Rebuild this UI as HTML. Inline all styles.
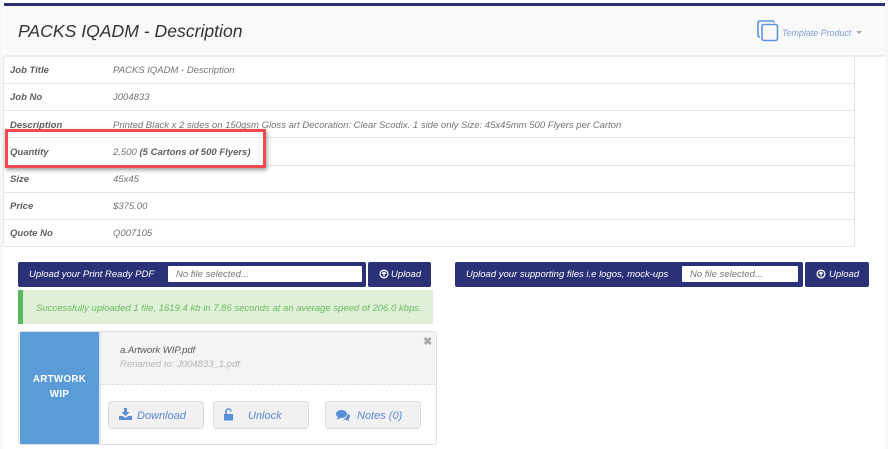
<!DOCTYPE html>
<html><head><meta charset="utf-8">
<style>
html,body{margin:0;padding:0;background:#fff}
body{width:888px;height:449px;position:relative;overflow:hidden;font-family:"Liberation Sans",sans-serif;font-style:italic}
#w{position:absolute;left:0;top:0;width:888px;height:449px;filter:blur(.3px)}
.a{position:absolute;white-space:nowrap}
.l{left:10px;font-size:9.500px;font-weight:bold;color:#5f5f5f;line-height:12px}
.v{left:113px;font-size:9.530px;color:#747474;line-height:12px}
.h{position:absolute;left:4px;width:851px;height:1px;background:#e6e6e6}
.navy{position:absolute;background:#2a3176;border-radius:2px;color:#fff;font-size:9.500px;line-height:25px;height:25px}
.inp{position:absolute;background:#fff;border-radius:1px;color:#777;font-size:9.500px;line-height:18px;height:16px;top:266px}
.btn{position:absolute;top:401px;height:28px;background:#f1f1f1;border:1px solid #dcdcdc;border-radius:4px;box-sizing:border-box;color:#5b86d6;font-size:11px;line-height:28px}
</style></head><body><div id="w">
<div class="a" style="left:0;top:0;width:3px;height:449px;background:#f7f7f7"></div>
<div class="a" style="left:885px;top:0;width:3px;height:449px;background:#f7f7f7"></div>
<div class="a" style="left:4px;top:6px;width:881px;height:49px;background:#f9f9f9"></div>
<div class="a" style="left:4px;top:3px;width:881px;height:3px;background:#2a3176"></div>
<div class="a" style="left:4px;top:55px;width:881px;height:2px;background:#ececec"></div>
<div class="a" style="left:18px;top:21px;font-size:17.600px;line-height:21px;color:#333">PACKS IQADM - Description</div>
<svg class="a" style="left:757px;top:20px" width="22" height="22" viewBox="0 0 22 22" fill="none" stroke="#5b93e2" stroke-width="1.6"><path d="M17 2.500 Q17 1 15 1 H3 Q1 1 1 3 V15 Q1 17 3 17"/><rect x="5" y="4.500" width="15.500" height="16" rx="2"/></svg>
<div class="a" style="left:782px;top:27px;font-size:8.900px;line-height:12px;color:#7f9fdc">Template Product</div>
<div class="a" style="left:856px;top:31px;width:0;height:0;border-left:3px solid transparent;border-right:3px solid transparent;border-top:3px solid #aaa"></div>

<div class="a" style="left:3px;top:57px;width:1px;height:189px;background:#e6e6e6"></div>
<div class="a" style="left:854px;top:57px;width:1px;height:190px;background:#e6e6e6"></div>
<div class="h" style="top:83px"></div>
<div class="h" style="top:110px"></div>
<div class="h" style="top:137px"></div>
<div class="h" style="top:165px"></div>
<div class="h" style="top:192px"></div>
<div class="h" style="top:219px"></div>
<div class="h" style="top:246px"></div>

<div class="a l" style="top:65px">Job Title</div><div class="a v" style="top:65px">PACKS IQADM - Description</div>
<div class="a l" style="top:92px">Job No</div><div class="a v" style="top:92px">J004833</div>
<div class="a l" style="top:120px">Description</div><div class="a v" style="top:120px">Printed Black x 2 sides on 150gsm Gloss art Decoration: Clear Scodix. 1 side only Size: 45x45mm 500 Flyers per Carton</div>
<div class="a l" style="top:147px">Quantity</div><div class="a v" style="top:147px">2,500 <b style="color:#5f5f5f">(5 Cartons of 500 Flyers)</b></div>
<div class="a l" style="top:174px">Size</div><div class="a v" style="top:174px">45x45</div>
<div class="a l" style="top:201px">Price</div><div class="a v" style="top:201px">$375.00</div>
<div class="a l" style="top:228px">Quote No</div><div class="a v" style="top:228px">Q007105</div>

<div class="a" style="left:5px;top:129px;width:255px;height:33px;border:3px solid #f04a50;box-shadow:1px 2px 4px rgba(0,0,0,.4)"></div>

<div class="navy" style="left:18px;top:262px;width:348px;padding-left:11px;box-sizing:border-box">Upload your Print Ready PDF</div>
<div class="inp" style="left:168px;width:194px;padding-left:8px;box-sizing:border-box">No file selected...</div>
<div class="navy" style="left:368px;top:262px;width:63px"><svg class="a" style="left:11px;top:7px" width="10" height="10" viewBox="0 0 10 10" fill="none" stroke="#fff" stroke-width="1.3"><circle cx="5" cy="5" r="3.900"/><path d="M5 7.500V3.200M3.200 4.800L5 3l1.800 1.800"/></svg><span class="a" style="left:23px">Upload</span></div>

<div class="a" style="left:18px;top:290px;width:415px;height:34px;background:#dff0d8"></div>
<div class="a" style="left:18px;top:290px;width:5px;height:34px;background:#5cb85c"></div>
<div class="a" style="left:36px;top:303px;font-size:9.530px;line-height:12px;color:#6cba5f">Successfully uploaded 1 file, 1619.4 kb in 7.86 seconds at an average speed of 206.0 kbps.</div>

<div class="navy" style="left:455px;top:262px;width:348px;padding-left:11px;box-sizing:border-box">Upload your supporting files i.e logos, mock-ups</div>
<div class="inp" style="left:682px;width:116px;padding-left:8px;box-sizing:border-box">No file selected...</div>
<div class="navy" style="left:805px;top:262px;width:64px"><svg class="a" style="left:11px;top:7px" width="10" height="10" viewBox="0 0 10 10" fill="none" stroke="#fff" stroke-width="1.3"><circle cx="5" cy="5" r="3.900"/><path d="M5 7.500V3.200M3.200 4.800L5 3l1.800 1.800"/></svg><span class="a" style="left:24px">Upload</span></div>

<div class="a" style="left:18px;top:331px;width:419px;height:114px;box-sizing:border-box;border:1px solid #e0e0e0;border-radius:3px;background:#fff"></div>
<div class="a" style="left:20px;top:332px;width:79px;height:112px;background:#5b9bd8"></div>
<div class="a" style="left:99px;top:332px;width:2px;height:112px;background:#dfe6ee"></div>
<div class="a" style="left:101px;top:332px;width:335px;height:52px;background:#f4f4f4;border-bottom:1px dashed #e0e0e0"></div>
<div class="a" style="left:20px;top:372px;width:79px;text-align:center;font-size:9.800px;font-weight:bold;font-style:normal;line-height:15px;color:#fff;white-space:normal;letter-spacing:.3px">ARTWORK<br>WIP</div>
<div class="a" style="left:120px;top:345px;font-size:9.500px;line-height:12px;color:#555">a.Artwork WIP.pdf</div>
<div class="a" style="left:120px;top:359px;font-size:9.500px;line-height:12px;color:#b5b5b5">Renamed to: J004833_1.pdf</div>
<div class="a" style="left:423px;top:337px;font-size:11px;line-height:11px;font-style:normal;font-weight:bold;color:#aaa">✖</div>

<div class="btn" style="left:108px;width:96px"><svg class="a" style="left:10px;top:6px" width="13" height="12" viewBox="0 0 13 12" fill="#5b8ed8"><path d="M5 0h3v4h2.500L6.500 8 2.500 4H5z"/><path d="M0 8h3.500l3 2 3-2H13v4H0z"/></svg><span class="a" style="left:28px">Download</span></div>
<div class="btn" style="left:213px;width:96px"><svg class="a" style="left:10px;top:6px" width="10" height="13" viewBox="0 0 10 13" fill="#5b8ed8"><path d="M0 6h9v6.500H0z"/><path d="M2 6V3.500a2.500 2.500 0 0 1 5 0" fill="none" stroke="#5b8ed8" stroke-width="1.6"/></svg><span class="a" style="left:34px">Unlock</span></div>
<div class="btn" style="left:325px;width:96px"><svg class="a" style="left:10px;top:8px" width="14" height="12" viewBox="0 0 14 12" fill="#5b8ed8"><ellipse cx="5.500" cy="4" rx="5.500" ry="4"/><path d="M2 6L1 10l4-2.500z"/><path d="M11.500 3.500C13 4.200 14 5.300 14 6.500c0 1-.6 1.900-1.500 2.500l.7 2.500-3-1.800C8.500 9.700 7.500 9.400 6.700 9c2.800-.2 5.200-2.500 4.800-5.500z"/></svg><span class="a" style="left:31px">Notes (0)</span></div>
</div></body></html>
